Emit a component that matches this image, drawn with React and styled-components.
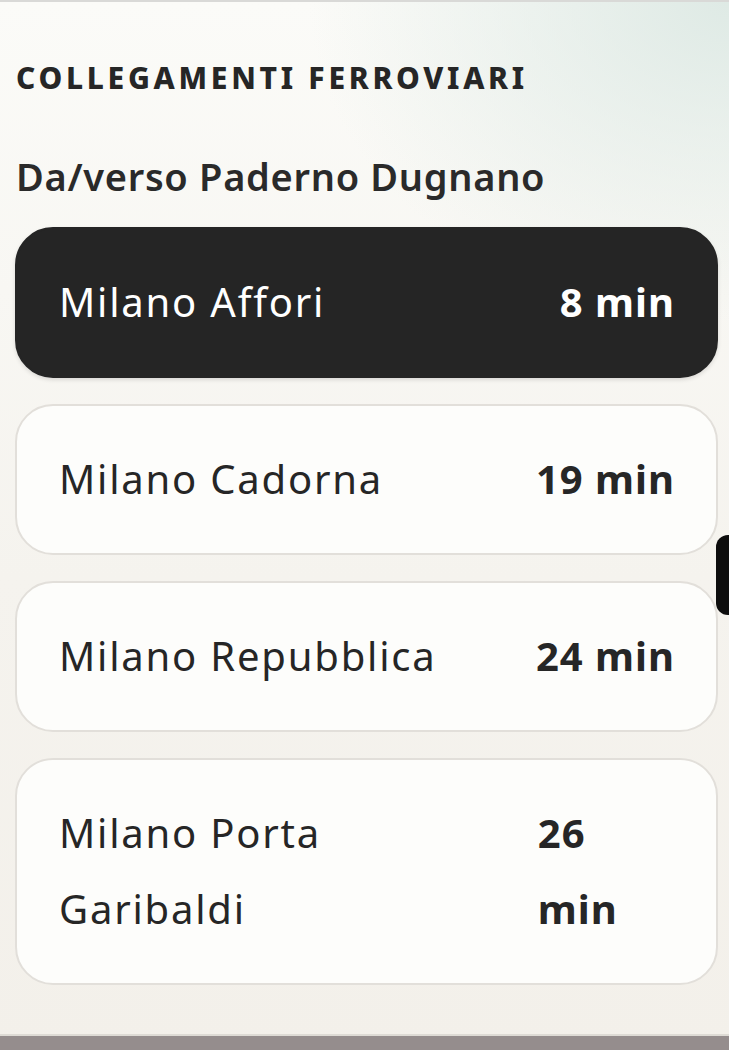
import React from 'react';
import styled, { createGlobalStyle } from 'styled-components';

// --- global reset ---
const GlobalStyle = createGlobalStyle`
  html, body {
    margin: 0;
    padding: 0;
  }
  body {
    font-family: "Noto Sans", Lato, sans-serif;
    color: #262626;
  }
`;

// --- page shell ---
const Page = styled.div`
  position: relative;
  height: 1050px;
  box-sizing: border-box;
  display: flex;
  flex-direction: column;
  border-top: 2px solid #d9d9d7;
  background:
    radial-gradient(ellipse 420px 320px at 100% 0%, rgba(221, 233, 228, 0.95) 0%, rgba(221, 233, 228, 0) 100%),
    linear-gradient(180deg, #fbfbf8 0%, #f5f3ee 55%, #f3f0ea 100%);
  overflow: hidden;
`;

const Main = styled.main`
  flex: 1;
  padding: 0 11px 0 15px;
`;

const Eyebrow = styled.h2`
  margin: 56px 0 0 1px;
  font-size: 30px;
  font-weight: 800;
  letter-spacing: 3.7px;
  line-height: 40px;
  text-transform: uppercase;
  color: #262626;
`;

const Title = styled.h1`
  margin: 50px 0 0 1px;
  font-size: 38px;
  font-weight: 600;
  letter-spacing: 0.7px;
  line-height: 56px;
  color: #2a2a2a;
`;

const List = styled.ul`
  list-style: none;
  margin: 23px 0 0;
  padding: 0;
  display: flex;
  flex-direction: column;
  gap: 26px;
`;

const Card = styled.li`
  display: flex;
  align-items: center;
  justify-content: space-between;
  gap: 24px;
  padding: 35px 41px 36px 42px;
  border-radius: 38px;
  border: 2px solid ${p => (p.$active ? '#252525' : '#e2dfda')};
  background: ${p => (p.$active ? '#252525' : '#fdfdfb')};
  color: ${p => (p.$active ? '#ffffff' : '#262626')};
  box-shadow: ${p => (p.$active ? '0 2px 4px rgba(0,0,0,0.12)' : 'none')};
`;

const Station = styled.span`
  font-size: 40px;
  font-weight: 400;
  letter-spacing: 1.8px;
  line-height: 76px;
`;

const Time = styled.span`
  font-size: 40px;
  font-weight: 700;
  letter-spacing: 1px;
  line-height: 76px;
`;

// side handle floating over the right edge
const SideTab = styled.div`
  position: absolute;
  right: 0;
  top: 533px;
  width: 13px;
  height: 80px;
  background: #0d0d0d;
  border-radius: 12px 0 0 12px;
`;

const BottomBar = styled.div`
  height: 14px;
  background: #958d8d;
  border-top: 2px solid #dedbd5;
`;

const routes = [
  { name: 'Milano Affori', time: '8 min', active: true },
  { name: 'Milano Cadorna', time: '19 min' },
  { name: 'Milano Repubblica', time: '24 min' },
  { name: 'Milano Porta Garibaldi', time: '26 min' },
];

export default function App() {
  return (
    <>
      <GlobalStyle />
      <Page>
        <Main>
          <Eyebrow>Collegamenti ferroviari</Eyebrow>
          <Title>Da/verso Paderno Dugnano</Title>
          <List>
            {routes.map(r => (
              <Card key={r.name} $active={r.active}>
                <Station>{r.name}</Station>
                <Time>{r.time}</Time>
              </Card>
            ))}
          </List>
        </Main>
        <SideTab />
        <BottomBar />
      </Page>
    </>
  );
}
